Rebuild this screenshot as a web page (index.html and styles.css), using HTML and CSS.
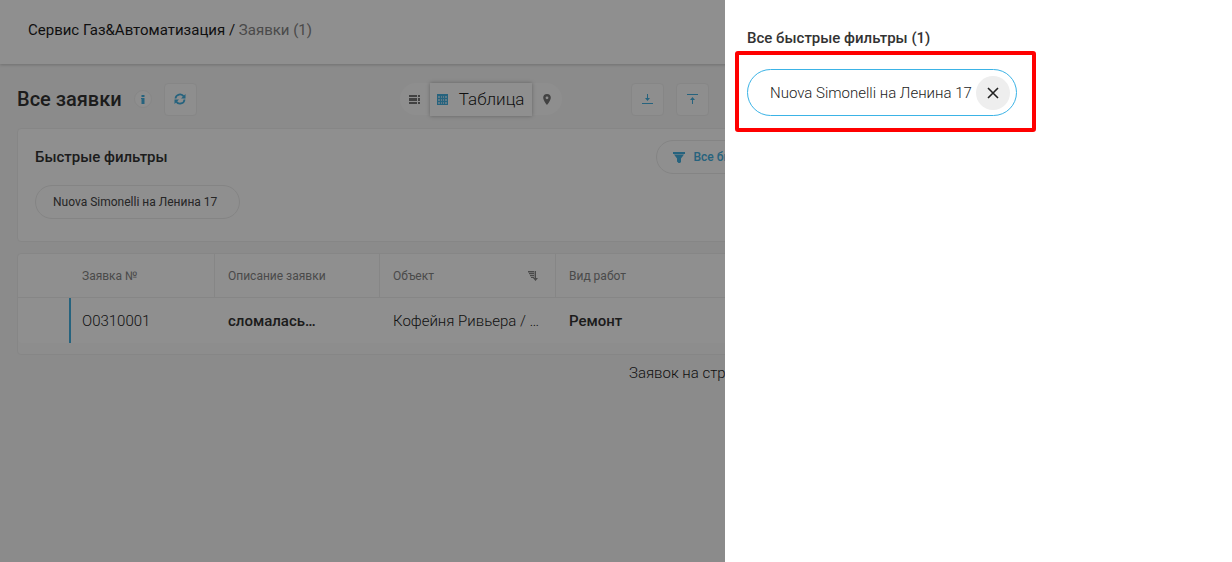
FILE: index.html
```html
<!DOCTYPE html>
<html lang="ru">
<head>
<meta charset="utf-8">
<meta name="viewport" content="width=device-width, initial-scale=1">
<title>Заявки</title>
<link rel="stylesheet" href="styles.css">
</head>
<body>
<div class="page">
  <header class="header">
    <nav class="crumbs"><a href="#">Сервис Газ&amp;Автоматизация</a> <span>/</span> <span class="crumb-current">Заявки (1)</span></nav>
  </header>
  <main class="content">
    <div class="toolbar">
      <h1 class="title">Все заявки</h1>
      <button class="info" type="button" aria-label="Информация">
        <svg width="4" height="9" viewBox="0 0 4 9" fill="currentColor"><path d="M.5 0h3v2h-3zM.5 3h3v6h-3zM0 3h1v1H0z"/></svg>
      </button>
      <button class="square" type="button" aria-label="Обновить">
        <svg width="12" height="12" viewBox="0 0 12 12" fill="none" stroke="currentColor" stroke-width="1.800"><path d="M1.500 5.500A4.500 4.500 0 0 1 9.800 3.500M10.500 6.500A4.500 4.500 0 0 1 2.200 8.500"/><path d="M11.500 1v4.500H7zM.5 11V6.500H5z" fill="currentColor" stroke="none"/></svg>
      </button>
      <div class="switch">
        <button class="switch-item" type="button" aria-label="Список">
          <svg width="11" height="9" viewBox="0 0 11 9" fill="currentColor"><path d="M0 0h8v2H0zM9 0h2v2H9zM0 3h8v3H0zM9 3h2v3H9zM0 7h8v2H0zM9 7h2v2H9z"/></svg>
        </button>
        <button class="switch-item switch-active" type="button">
          <svg width="11" height="11" viewBox="0 0 11 11"><path class="grid-fill" d="M0 0h11v11H0z"/><path class="grid-cells" d="M1 2h2v2H1zM4 2h1v2H4zM6 2h1v2H6zM8 2h2v2H8zM1 5h2v2H1zM4 5h1v2H4zM6 5h1v2H6zM8 5h2v2H8zM1 8h2v2H1zM4 8h1v2H4zM6 8h1v2H6zM8 8h2v2H8z"/></svg>
          Таблица
        </button>
        <button class="switch-item" type="button" aria-label="Карта">
          <svg width="8" height="11" viewBox="0 0 8 11" fill="currentColor"><path fill-rule="evenodd" d="M4 0a3.800 3.800 0 0 1 3.800 3.800C7.800 6.600 4 11 4 11S.2 6.600.2 3.800A3.800 3.800 0 0 1 4 0zm0 2.400a1.400 1.400 0 1 0 0 2.800 1.400 1.400 0 0 0 0-2.800z"/></svg>
        </button>
      </div>
      <div class="transfer">
        <button class="square" type="button" aria-label="Скачать">
          <svg width="11" height="10" viewBox="0 0 11 10" fill="currentColor"><path d="M0 9h11v1H0zM5 0h1v4h2L5.500 7 3 4h2z"/></svg>
        </button>
        <button class="square" type="button" aria-label="Загрузить">
          <svg width="11" height="10" viewBox="0 0 11 10" fill="currentColor"><path d="M0 0h11v1H0zM5 10h1V6h2L5.500 3 3 6h2z"/></svg>
        </button>
      </div>
    </div>

    <section class="card filters">
      <div class="filters-head">
        <h2 class="subtitle">Быстрые фильтры</h2>
        <button class="pill pill-all" type="button">
          <svg width="12" height="11" viewBox="0 0 12 11" fill="currentColor"><path d="M0 0h12v2H0zM1 2.600h10L8 6.500V10l-1 1H5.500L4 9.500v-3z"/></svg>
          Все быстрые фильтры
        </button>
      </div>
      <button class="pill pill-saved" type="button">Nuova Simonelli на Ленина 17</button>
    </section>

    <section class="card list">
      <table class="table">
        <colgroup><col class="col-mark"><col class="col-number"><col class="col-text"><col class="col-object"><col></colgroup>
        <thead>
          <tr>
            <th></th>
            <th>Заявка №</th>
            <th>Описание заявки</th>
            <th><div class="sortable">Объект
              <svg width="10" height="10" viewBox="0 0 10 10" fill="currentColor"><path d="M0 0h6v1.400H0zM1 2h5v1.200H1zM2 4h4v1.200H2zM3 6h3v1H3zM6.600 0h1.400v7h2l-2.500 3L5 7h1.600z"/></svg></div></th>
            <th>Вид работ</th>
          </tr>
        </thead>
        <tbody>
          <tr>
            <td></td>
            <td class="accent">О0310001</td>
            <td class="strong">сломалась…</td>
            <td>Кофейня Ривьера / …</td>
            <td class="strong">Ремонт</td>
          </tr>
        </tbody>
      </table>
    </section>
    <div class="pager">Заявок на странице</div>
  </main>
</div>

<div class="overlay"></div>
<aside class="drawer" aria-label="Быстрые фильтры">
  <h2 class="drawer-title">Все быстрые фильтры (1)</h2>
  <div class="highlight">
    <div class="choice">
      <a class="choice-name" href="#">Nuova Simonelli на Ленина 17</a>
      <button class="remove" type="button" aria-label="Удалить фильтр">
        <svg width="12" height="12" viewBox="0 0 12 12" fill="none" stroke="currentColor" stroke-width="1.600"><path d="M1 1l10 10M11 1L1 11"/></svg>
      </button>
    </div>
  </div>
</aside>
</body>
</html>
```

FILE: styles.css
```css
* { box-sizing: border-box; }
body {
  margin: 0;
  background: #f8f8f8;
  color: #1c1c1c;
  font: 300 15px/20px Roboto, "Noto Sans", sans-serif;
}
button { font: inherit; color: inherit; padding: 0; cursor: pointer; }
h1, h2 { margin: 0; font-weight: 500; }
a { color: inherit; text-decoration: none; }
svg { flex: none; }

.page { min-height: 100vh; }
.header {
  display: flex;
  align-items: center;
  height: 64px;
  padding: 0 28px 4px;
  background: #fff;
  box-shadow: 0 1px 3px rgba(0, 0, 0, .2);
}
.crumbs { font-weight: 400; }
.crumb-current { color: #858585; }

.content { max-width: 874px; padding: 18px 17px; }
.toolbar { display: flex; align-items: center; height: 34px; }
.title { color: #333; font-size: 20px; line-height: 24px; }
.info, .square {
  display: flex;
  align-items: center;
  justify-content: center;
  background: #fdfdfd;
  border: 1px solid #efefef;
  color: #45b0e0;
}
.info { width: 18px; height: 18px; margin: 0 12px; border-radius: 50%; }
.square { width: 33px; height: 33px; border-radius: 4px; }

.switch { display: flex; align-items: center; margin-left: 203px; }
.switch-item {
  display: flex;
  align-items: center;
  justify-content: center;
  width: 30px;
  height: 32px;
  border: 0;
  background: #fdfdfd;
  color: #777;
}
.switch-item:first-child { border-radius: 16px 0 0 16px; }
.switch-item:last-child { border-radius: 0 16px 16px 0; }
.switch-item.switch-active {
  z-index: 1;
  gap: 11px;
  width: 102px;
  height: 33px;
  background: #fff;
  color: #1c1c1c;
  font-size: 17px;
  box-shadow: 0 0 4px rgba(0, 0, 0, .3);
}
.grid-fill { fill: #45b0e0; }
.grid-cells { fill: #a9d9f0; }
.transfer { display: flex; gap: 12px; margin-left: 69px; }

.card {
  background: #fff;
  border: 1px solid #efefef;
  border-radius: 4px;
}
.filters { margin-top: 12px; padding: 11px 17px 22px; }
.filters-head { display: flex; align-items: center; justify-content: space-between; margin-bottom: 11px; }
.subtitle, .drawer-title { color: #333; font-size: 15px; line-height: 20px; }
.pill {
  display: flex;
  align-items: center;
  gap: 8px;
  height: 34px;
  padding: 0 17px;
  border: 1px solid #ececec;
  border-radius: 17px;
  background: #fff;
  color: #444;
  font-size: 12px;
  font-weight: 400;
}
.pill-saved { padding-right: 22px; }
.pill-all { padding: 0 16px; color: #45b0e0; font-weight: 500; }

.list { margin-top: 11px; padding-bottom: 11px; background: #fbfbfb; }
.table { width: 100%; table-layout: fixed; border-collapse: separate; border-spacing: 0; background: #fff; border-radius: 4px; }
.col-mark { width: 51px; }
.col-number { width: 145px; }
.col-text { width: 165px; }
.col-object { width: 176px; }
.table th, .table td { padding: 0 13px; text-align: left; white-space: nowrap; overflow: hidden; }
.table th {
  height: 44px;
  border-bottom: 1px solid #efefef;
  color: #858585;
  font-size: 12px;
  font-weight: 400;
}
.table th + th + th { border-left: 1px solid #efefef; }
.table td { height: 45px; }
.table td + td + td { padding-left: 14px; }
.accent { box-shadow: inset 2px 0 #45b0e0; }
.table .strong { color: #333; font-weight: 500; }
.sortable { display: flex; align-items: center; justify-content: space-between; padding-right: 4px; }
.pager { margin-top: 8px; padding-left: 612px; white-space: nowrap; }

.overlay { position: fixed; inset: 0; z-index: 2; background: rgba(0, 0, 0, .44); }
.drawer {
  position: fixed;
  z-index: 3;
  top: 0;
  right: 0;
  bottom: 0;
  width: 507px;
  max-width: 100%;
  padding: 28px 10px;
  background: #fff;
}
.drawer-title { margin: 0 12px 3px; }
.highlight {
  width: fit-content;
  padding: 14px 15px 12px 8px;
  border: 4px solid #f00;
  border-radius: 3px;
}
.choice {
  display: flex;
  align-items: center;
  gap: 4px;
  height: 47px;
  padding: 0 6px 0 22px;
  border: 1px solid #3bb3e6;
  border-radius: 24px;
}
.remove {
  display: flex;
  align-items: center;
  justify-content: center;
  width: 34px;
  height: 34px;
  border: 0;
  border-radius: 50%;
  background: #eee;
  color: #222;
}
```
